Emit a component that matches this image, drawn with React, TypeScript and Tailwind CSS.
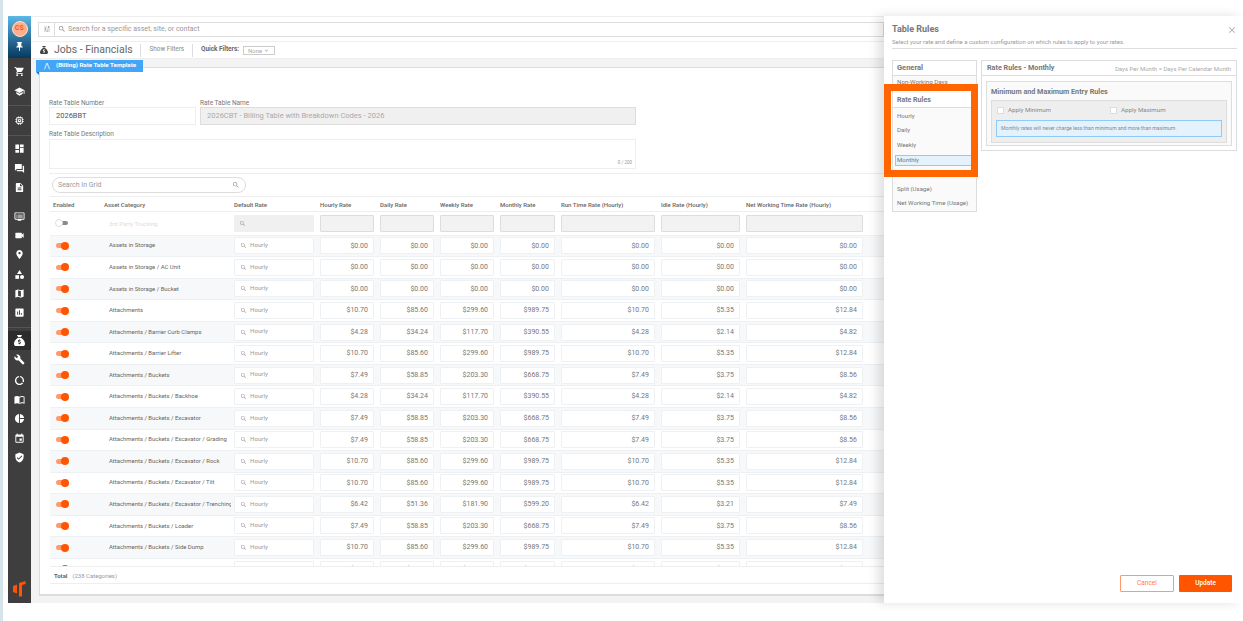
import React from "react";
import {
  MdShoppingCart,
  MdSchool,
  MdDashboard,
  MdForum,
  MdDescription,
  MdDvr,
  MdVideocam,
  MdPlace,
  MdCategory,
  MdMap,
  MdAssessment,
  MdBuild,
  MdDataUsage,
  MdPieChart,
  MdEvent,
  MdVerifiedUser,
  MdPushPin,
  MdMemory,
  MdImportContacts,
  MdClose,
  MdKeyboardArrowDown,
  MdTune,
  MdSearch,
} from "react-icons/md";
import { FaSackDollar } from "react-icons/fa6";

const zero = ["$0.00", "$0.00", "$0.00", "$0.00", "$0.00", "$0.00", "$0.00"];
const rateA = ["$10.70", "$85.60", "$299.60", "$989.75", "$10.70", "$5.35", "$12.84"];
const rateB = ["$4.28", "$34.24", "$117.70", "$390.55", "$4.28", "$2.14", "$4.82"];
const rateC = ["$7.49", "$58.85", "$203.30", "$668.75", "$7.49", "$3.75", "$8.56"];
const rateD = ["$6.42", "$51.36", "$181.90", "$599.20", "$6.42", "$3.21", "$7.49"];

const rows = [
  { name: "Assets in Storage", rates: zero },
  { name: "Assets in Storage / AC Unit", rates: zero },
  { name: "Assets in Storage / Bucket", rates: zero },
  { name: "Attachments", rates: rateA },
  { name: "Attachments / Barrier Curb Clamps", rates: rateB },
  { name: "Attachments / Barrier Lifter", rates: rateA },
  { name: "Attachments / Buckets", rates: rateC },
  { name: "Attachments / Buckets / Backhoe", rates: rateB },
  { name: "Attachments / Buckets / Excavator", rates: rateC },
  { name: "Attachments / Buckets / Excavator / Grading", rates: rateC },
  { name: "Attachments / Buckets / Excavator / Rock", rates: rateA },
  { name: "Attachments / Buckets / Excavator / Tilt", rates: rateA },
  { name: "Attachments / Buckets / Excavator / Trenching", rates: rateD },
  { name: "Attachments / Buckets / Loader", rates: rateC },
  { name: "Attachments / Buckets / Side Dump", rates: rateA },
  { name: "Attachments / Buckets / Skid Steer", rates: rateB },
];

const headers = [
  "Enabled",
  "Asset Category",
  "Default Rate",
  "Hourly Rate",
  "Daily Rate",
  "Weekly Rate",
  "Monthly Rate",
  "Run Time Rate (Hourly)",
  "Idle Rate (Hourly)",
  "Net Working Time Rate (Hourly)",
];

const gridCols =
  "grid grid-cols-[51px_130px_86px_60px_60px_60px_61px_100px_85px_123px]";

const NavIcon = ({ icon: Icon, active }: { icon: React.ElementType; active?: boolean }) => (
  <div
    className={`flex h-[19.4px] items-center justify-center text-white ${active ? "bg-[#2c2c2c]" : ""}`}
  >
    <Icon size={11} />
  </div>
);

const Toggle = ({ on }: { on: boolean }) =>
  on ? (
    <div className="relative ml-[6px] h-[5px] w-[12px] rounded-full bg-[#ff9a6c]">
      <div className="absolute -right-[1px] -top-[1.5px] h-2 w-2 rounded-full bg-[#ff5500]" />
    </div>
  ) : (
    <div className="relative ml-[6px] h-[4px] w-[12px] rounded-full bg-[#8a8a8a]">
      <div className="absolute -left-[1px] -top-[2px] h-2 w-2 rounded-full border border-[#ddd] bg-white" />
    </div>
  );

const MenuItem = ({ label }: { label: string }) => (
  <div className="flex h-[14.5px] items-center pl-[4px] text-[6.1px] text-[#777]">{label}</div>
);

export default function App() {
  return (
    <div className="relative h-[621px] w-[1243px] overflow-hidden border-l-[3px] border-[#d5e3ea] bg-white pl-[5px] pt-4 font-[Roboto,sans-serif]">
      <div className="flex h-[587px]">
        {/* sidebar */}
        <div className="flex w-[23px] shrink-0 flex-col bg-[#3e3e3e]">
          <div className="flex h-[42px] shrink-0 flex-col items-center bg-gradient-to-b from-[#5cb8e6] to-[#06395f] pt-[5px]">
            <div className="flex h-4 w-4 shrink-0 items-center justify-center rounded-full border border-[#ffe0d0] bg-[#ffae8c] text-[6.5px] font-medium tracking-[0.5px] text-[#ff4a00]">
              CS
            </div>
            <MdPushPin size={11} className="mt-[4px] text-white" />
          </div>
          <div className="border-b border-[#555] pb-[4px] pt-[4px]">
            <NavIcon icon={MdShoppingCart} />
            <NavIcon icon={MdSchool} />
          </div>
          <div className="border-b border-[#555] py-[5px]">
            <NavIcon icon={MdMemory} />
          </div>
          <div className="pt-[3px]">
            <NavIcon icon={MdDashboard} />
            <NavIcon icon={MdForum} />
            <NavIcon icon={MdDescription} />
          </div>
          <div className="border-b border-[#555] pb-[4px] pt-[9px]">
            <NavIcon icon={MdDvr} />
            <NavIcon icon={MdVideocam} />
            <NavIcon icon={MdPlace} />
            <NavIcon icon={MdCategory} />
            <NavIcon icon={MdMap} />
            <NavIcon icon={MdAssessment} />
          </div>
          <div className="pt-[3px]">
            <NavIcon icon={FaSackDollar} active />
            <NavIcon icon={MdBuild} />
            <div className="pt-[1px]">
              <NavIcon icon={MdDataUsage} />
            </div>
            <NavIcon icon={MdImportContacts} />
            <NavIcon icon={MdPieChart} />
            <NavIcon icon={MdEvent} />
            <NavIcon icon={MdVerifiedUser} />
          </div>
          <div className="mt-auto flex justify-center pb-[6px]">
            <svg width="15" height="16" viewBox="0 0 15 16">
              <path d="M1 5 L5 3.5 V12.5 L1 11 Z" fill="#ff5500" />
              <path d="M7 15.5 V2 L13.5 0 V3 L10 4 V15.5 Z" fill="#ff5500" />
            </svg>
          </div>
        </div>

        {/* main */}
        <div className="flex min-w-0 flex-1 flex-col border-t border-[#eee]">
          <div className="flex h-[24px] shrink-0 items-center pl-[7px]">
            <div className="flex h-[15px] w-full items-center border border-[#ddd] bg-white">
              <div className="flex h-full w-[16px] items-center justify-center border-r border-[#ddd] text-[#888]">
                <MdTune size={8} />
              </div>
              <MdSearch size={8} className="ml-[3px] text-[#888]" />
              <span className="ml-[2px] text-[7px] text-[#999]">
                Search for a specific asset, site, or contact
              </span>
            </div>
          </div>
          <div className="flex h-[18px] shrink-0 items-center border-y border-[#eee] pl-[9px]">
            <FaSackDollar size={8} className="text-[#444]" />
            <span className="ml-[6px] text-[10.5px] text-[#666]">Jobs - Financials</span>
            <div className="ml-[7px] h-[13px] border-l border-[#ddd]" />
            <span className="ml-[9px] text-[6.3px] text-[#888]">Show Filters</span>
            <div className="ml-[8px] h-[13px] border-l border-[#ddd]" />
            <span className="ml-[8px] text-[6.4px] font-bold text-[#666]">Quick Filters:</span>
            <div className="ml-[4px] flex h-[9px] w-[32px] items-center justify-between border border-[#ccc] px-[4px] text-[6px] text-[#aaa]">
              None
              <MdKeyboardArrowDown size={7} />
            </div>
          </div>

          <div className="relative min-h-0 flex-1 bg-[#f3f3f3] pl-[8px] pt-[8px]">
            {/* banner */}
            <div className="absolute left-[5px] top-[1px] z-10 flex h-[12px] w-[107px] items-center bg-[#42a5f5] pl-[8px] text-[6.2px] font-bold text-white">
              <span className="mr-[6px] text-[7px] font-normal">⋀</span>
              (Billing) Rate Table Template
              <div className="absolute left-0 top-[12px] h-0 w-0 border-l-[3px] border-t-[3px] border-l-transparent border-t-[#1976d2]" />
            </div>
            {/* card */}
            <div className="flex h-[529px] flex-col border-b-2 border-l border-t border-[#ddd] bg-white pl-[9px] pt-[31px]">
              <div className="flex gap-1 text-[6.5px] text-[#777]">
                <div className="w-[147px]">
                  <div className="h-[8px]">Rate Table Number</div>
                  <div className="flex h-[18px] items-center border border-[#eee] pl-[6px] text-[7.5px] text-[#555]">
                    2026BBT
                  </div>
                </div>
                <div className="w-[436px]">
                  <div className="h-[8px]">Rate Table Name</div>
                  <div className="flex h-[18px] items-center border border-[#ddd] bg-[#f0f0f0] pl-[6px] text-[7.5px] text-[#aaa]">
                    2026CBT - Billing Table with Breakdown Codes - 2026
                  </div>
                </div>
              </div>
              <div className="mt-[5px] w-[587px] text-[6.5px] text-[#777]">
                <div className="h-[9px]">Rate Table Description</div>
                <div className="flex h-[30px] items-end justify-end border border-[#eee] pb-[1px] pr-[3px] text-[4.5px] text-[#999]">
                  0 / 200
                </div>
              </div>

              <div className="mt-[4px] flex min-h-0 flex-1 flex-col border-t border-[#eee] pl-[1px]">
                <div className="flex h-[22px] shrink-0 items-center pl-[2px]">
                  <div className="flex h-[16px] w-[194px] items-center justify-between rounded-full border border-[#ddd] px-[5px] text-[7px] text-[#999]">
                    Search In Grid
                    <MdSearch size={8} />
                  </div>
                </div>
                <div className={`${gridCols} h-[16px] shrink-0 items-center border-y border-[#eee] text-[6px] font-medium text-[#666]`}>
                  {headers.map((h) => (
                    <div key={h} className="truncate pl-[3px]">
                      {h}
                    </div>
                  ))}
                </div>
                <div className="min-h-0 flex-1 overflow-hidden">
                  <div className={`${gridCols} h-[23.6px] items-center border-b border-[#eef1f4] text-[6px] text-[#ddd]`}>
                    <Toggle on={false} />
                    <div className="pl-[8px]">3rd Party Trucking</div>
                    <div className="px-[3px]">
                      <div className="flex h-[17px] items-center rounded-[1px] bg-[#f0f0f0] pl-[5px] text-[#999]">
                        <MdSearch size={7} />
                      </div>
                    </div>
                    {headers.slice(3).map((h) => (
                      <div key={h} className="px-[3px]">
                        <div className="h-[17px] rounded-[1px] border border-[#ddd] bg-[#f2f2f2]" />
                      </div>
                    ))}
                  </div>
                  {rows.map((row, i) => (
                    <div
                      key={row.name}
                      className={`${gridCols} h-[21.55px] items-center border-b border-[#eef1f4] ${i % 2 === 0 ? "bg-[#f7f8fa]" : "bg-white"}`}
                    >
                      <Toggle on />
                      <div className="overflow-hidden whitespace-nowrap pl-[8px] text-[5.95px] text-[#666]">
                        {row.name}
                      </div>
                      <div className="px-[3px]">
                        <div className="flex h-[17px] items-center rounded-[1px] border border-[#eef1f4] bg-white pl-[5px] text-[6.2px] text-[#999]">
                          <MdSearch size={7} className="mr-[3px]" />
                          Hourly
                        </div>
                      </div>
                      {row.rates.map((r, j) => (
                        <div key={j} className="px-[3px]">
                          <div className="flex h-[17px] items-center justify-end rounded-[1px] border border-[#eef1f4] bg-white pr-[5px] text-[7px] text-[#777]">
                            {r}
                          </div>
                        </div>
                      ))}
                    </div>
                  ))}
                </div>
                <div className="flex h-[18px] shrink-0 items-center border-y border-[#eee] bg-white pl-[4px] text-[6px] text-[#999]">
                  <span className="mr-[5px] font-bold text-[#666]">Total</span>
                  (238 Categories)
                </div>
                <div className="h-[10px] shrink-0" />
              </div>
            </div>
          </div>
        </div>

        {/* table rules panel */}
        <div className="relative z-20 flex w-[359px] shrink-0 flex-col bg-white pl-2 pr-[6px] shadow-[-6px_0_10px_rgba(0,0,0,0.12)]">
          <div className="relative h-[33px] shrink-0 border-b border-[#ddd] pt-[8px]">
            <div className="text-[9px] font-bold leading-[11px] text-[#777]">Table Rules</div>
            <div className="mt-[3px] text-[6px] leading-[8px] text-[#999]">
              Select your rate and define a custom configuration on which rules to apply to your rates.
            </div>
            <MdClose size={10} className="absolute right-0 top-[9px] text-[#aaa]" />
          </div>
          <div className="mt-[11px] flex gap-1">
            <div className="h-[152px] w-[85px] border border-[#ddd] bg-[#fafafa]">
              <div className="flex h-[15px] items-center border-b border-[#ddd] bg-white pl-[4px] text-[7.5px] font-bold text-[#777]">
                General
              </div>
              <div className="flex h-[14px] items-center pl-[4px] text-[6.2px] text-[#777]">
                Non-Working Days
              </div>
              <div className="mt-[3px] flex h-[15px] items-center border-b border-[#ddd] bg-white pl-[4px] text-[7px] font-bold text-[#777]">
                Rate Rules
              </div>
              <div>
                <MenuItem label="Hourly" />
                <MenuItem label="Daily" />
                <MenuItem label="Weekly" />
              </div>
              <div className="ml-[2px] mt-[3px] flex h-[11px] items-center border border-[#90caf9] bg-[#e3f2fd] pl-[1px] text-[6.1px] text-[#777]">
                Monthly
              </div>
              <div className="pt-[1px]">
                <MenuItem label="Run Time (Usage)" />
                <MenuItem label="Split (Usage)" />
                <MenuItem label="Net Working Time (Usage)" />
              </div>
            </div>
            <div className="h-[91px] flex-1 border border-[#ddd]">
              <div className="flex h-[15px] items-center justify-between border-b border-[#ddd] px-[5px]">
                <span className="text-[7.2px] font-bold text-[#777]">Rate Rules - Monthly</span>
                <span className="text-[6px] text-[#aaa]">Days Per Month = Days Per Calendar Month</span>
              </div>
              <div className="mx-[4px] mt-[5px] h-[65px] border border-[#ddd] bg-[#fafafa] px-[4px] pt-[5px]">
                <div className="text-[7.2px] font-bold leading-[9px] text-[#777]">
                  Minimum and Maximum Entry Rules
                </div>
                <div className="mt-[4px] h-[43px] border border-[#ddd] bg-[#eeeeee] px-[4px]">
                  <div className="flex h-[19px] items-center pl-[1px] text-[6.2px] text-[#888]">
                    <div className="mr-[4px] h-[7px] w-[7px] border border-[#ddd] bg-white" />
                    <span className="w-[102px]">Apply Minimum</span>
                    <div className="mr-[4px] h-[7px] w-[7px] border border-[#ddd] bg-white" />
                    <span>Apply Maximum</span>
                  </div>
                  <div className="flex h-[17px] items-center border border-[#90caf9] bg-[#e3f2fd] pl-[4px] text-[5.15px] text-[#888]">
                    Monthly rates will never charge less than minimum and more than maximum.
                  </div>
                </div>
              </div>
            </div>
          </div>
          <div className="mb-[11px] mt-auto flex justify-end gap-[5px] pr-[5px]">
            <button className="h-[17px] w-[54px] rounded-[1px] border border-[#ff9a6c] bg-white text-[6.5px] text-[#ff7a45]">
              Cancel
            </button>
            <button className="h-[17px] w-[53px] rounded-[1px] bg-[#ff5500] text-[6.5px] font-medium text-white">
              Update
            </button>
          </div>
        </div>
      </div>

      {/* orange highlight drawn over the menu */}
      <div className="absolute left-[881px] top-[84px] z-30 h-[93px] w-[94px] border-[7px] border-[#ff6600]" />
    </div>
  );
}
